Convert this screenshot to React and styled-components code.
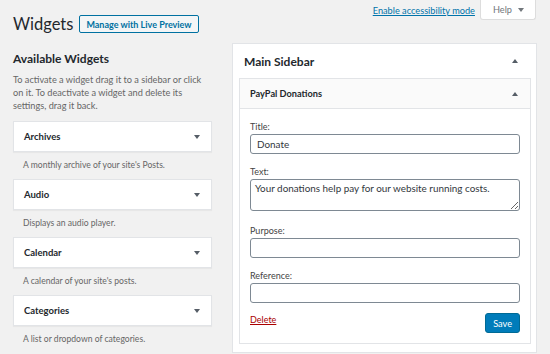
import styled, { createGlobalStyle } from "styled-components";

const GlobalStyle = createGlobalStyle`
  *, *::before, *::after {
    box-sizing: border-box;
  }
  html, body {
    margin: 0;
    padding: 0;
    background: #f1f1f1;
  }
  body {
    width: 550px;
    height: 354px;
    overflow: hidden;
    font-family: Lato, "Noto Sans", sans-serif;
    color: #444;
  }
`;

const availableWidgets = [
  { name: "Archives", desc: "A monthly archive of your site's Posts." },
  { name: "Audio", desc: "Displays an audio player." },
  { name: "Calendar", desc: "A calendar of your site's posts." },
  { name: "Categories", desc: "A list or dropdown of categories." },
];

function App() {
  return (
    <>
      <GlobalStyle />
      <Page>
        <Header>
          <TitleGroup>
            <Title>Widgets</Title>
            <OutlineButton>Manage with Live Preview</OutlineButton>
          </TitleGroup>
          <ScreenMeta>
            <A11yLink href="#">Enable accessibility mode</A11yLink>
            <HelpTab>
              Help <Arrow $dir="down" $color="#72777c" />
            </HelpTab>
          </ScreenMeta>
        </Header>

        <Columns>
          <LeftColumn>
            <SectionTitle>Available Widgets</SectionTitle>
            <Intro>
              To activate a widget drag it to a sidebar or click on it. To
              deactivate a widget and delete its settings, drag it back.
            </Intro>
            {availableWidgets.map((w) => (
              <div key={w.name}>
                <WidgetCard>
                  <span>{w.name}</span>
                  <Arrow $dir="down" />
                </WidgetCard>
                <WidgetDesc>{w.desc}</WidgetDesc>
              </div>
            ))}
          </LeftColumn>

          <SidebarPanel>
            <SidebarHeader>
              <h2>Main Sidebar</h2>
              <Arrow $dir="up" />
            </SidebarHeader>
            <WidgetBox>
              <WidgetTop>
                <span>PayPal Donations</span>
                <Arrow $dir="up" />
              </WidgetTop>
              <WidgetForm>
                <Field>
                  <Label>Title:</Label>
                  <Input defaultValue="Donate" />
                </Field>
                <Field $extra={2}>
                  <Label>Text:</Label>
                  <TextArea defaultValue="Your donations help pay for our website running costs." />
                </Field>
                <Field>
                  <Label>Purpose:</Label>
                  <Input />
                </Field>
                <Field $extra={-2}>
                  <Label>Reference:</Label>
                  <Input />
                </Field>
                <Actions>
                  <DeleteLink href="#">Delete</DeleteLink>
                  <SaveButton>Save</SaveButton>
                </Actions>
              </WidgetForm>
            </WidgetBox>
          </SidebarPanel>
        </Columns>
      </Page>
    </>
  );
}

const Page = styled.div`
  padding: 0 14px 0 13px;
`;

const Header = styled.div`
  display: flex;
  justify-content: space-between;
  align-items: flex-start;
  height: 43px;
`;

const TitleGroup = styled.div`
  display: flex;
  align-items: center;
  gap: 6px;
  margin-top: 14px;
`;

const Title = styled.h1`
  margin: 0;
  font-size: 16.5px;
  font-weight: 400;
  line-height: 20px;
  color: #23282d;
`;

const OutlineButton = styled.button`
  height: 18px;
  padding: 0 6px;
  border: 1px solid #0071a1;
  border-radius: 2px;
  background: #f3f5f6;
  color: #0071a1;
  font-family: inherit;
  font-size: 9px;
  font-weight: 700;
`;

const ScreenMeta = styled.div`
  display: flex;
  align-items: flex-start;
  gap: 5px;
`;

const A11yLink = styled.a`
  margin-top: 5px;
  font-size: 9.2px;
  line-height: 12px;
  color: #0073aa;
  text-decoration: underline;
`;

const HelpTab = styled.div`
  display: flex;
  align-items: center;
  gap: 6px;
  height: 20px;
  padding: 0 11px 0 12px;
  background: #fff;
  border: 1px solid #ddd;
  border-top: none;
  border-radius: 0 0 3px 3px;
  font-size: 9.2px;
  color: #72777c;
`;

const Arrow = styled.span`
  display: inline-block;
  width: 0;
  height: 0;
  border-left: 3px solid transparent;
  border-right: 3px solid transparent;
  ${({ $dir, $color = "#555d66" }) =>
    $dir === "up"
      ? `border-bottom: 4px solid ${$color};`
      : `border-top: 4px solid ${$color};`}
`;

const Columns = styled.div`
  display: flex;
  align-items: flex-start;
  gap: 20px;
`;

const LeftColumn = styled.div`
  width: 199px;
  flex-shrink: 0;
`;

const SectionTitle = styled.h3`
  margin: 7px 0 5px;
  font-size: 12px;
  font-weight: 700;
  color: #23282d;
  line-height: 18px;
`;

const Intro = styled.p`
  margin: 0 0 9px;
  font-size: 9.2px;
  line-height: 13px;
  color: #666;
`;

const WidgetCard = styled.div`
  display: flex;
  justify-content: space-between;
  align-items: center;
  height: 31px;
  padding: 0 11px 0 10px;
  background: #fff;
  border: 1px solid #e2e4e7;
  box-shadow: 0 1px 1px rgba(0, 0, 0, 0.04);
  font-size: 9.5px;
  font-weight: 700;
  color: #23282d;
`;

const WidgetDesc = styled.p`
  margin: 0;
  padding: 7px 10px 7px;
  font-size: 8.6px;
  line-height: 13px;
  color: #666;
`;

const SidebarPanel = styled.div`
  width: 305px;
  flex-shrink: 0;
  background: #fff;
  border: 1px solid #e2e4e7;
  padding: 0 5px 8px 6px;
`;

const SidebarHeader = styled.div`
  display: flex;
  justify-content: space-between;
  align-items: center;
  height: 34px;
  padding: 0 13px 0 5px;

  h2 {
    margin: 0;
    font-size: 12px;
    font-weight: 700;
    color: #23282d;
  }
`;

const WidgetBox = styled.div`
  border: 1px solid #e2e4e7;
`;

const WidgetTop = styled.div`
  display: flex;
  justify-content: space-between;
  align-items: center;
  height: 30px;
  padding: 0 12px 0 10px;
  background: #fafafa;
  border-bottom: 1px solid #e2e4e7;
  font-size: 9.2px;
  font-weight: 700;
  color: #23282d;
`;

const WidgetForm = styled.div`
  padding: 12px 10px 10px 10px;
`;

const Field = styled.div`
  margin-bottom: ${({ $extra = 0 }) => 12 + $extra}px;
`;

const Label = styled.label`
  display: block;
  margin-bottom: 1px;
  font-size: 9px;
  line-height: 12px;
  color: #444;
`;

const fieldBase = `
  display: block;
  width: 100%;
  margin: 0;
  border: 1px solid #7e8993;
  border-radius: 3px;
  background: #fff;
  font-family: Lato, "Noto Sans", sans-serif;
  font-size: 9.9px;
  color: #32373c;
  outline: none;
`;

const Input = styled.input`
  ${fieldBase}
  height: 20px;
  padding: 0 6px;
`;

const TextArea = styled.textarea`
  ${fieldBase}
  height: 32px;
  padding: 2px 4px;
  line-height: 12px;
  resize: vertical;
`;

const Actions = styled.div`
  display: flex;
  justify-content: space-between;
  align-items: flex-start;
`;

const DeleteLink = styled.a`
  font-size: 9px;
  line-height: 14px;
  color: #a00;
  text-decoration: underline;
`;

const SaveButton = styled.button`
  height: 20px;
  padding: 0 7px;
  border: 1px solid #006a95;
  border-radius: 3px;
  background: #007cba;
  color: #fff;
  font-family: inherit;
  font-size: 9.2px;
`;

export default App;
